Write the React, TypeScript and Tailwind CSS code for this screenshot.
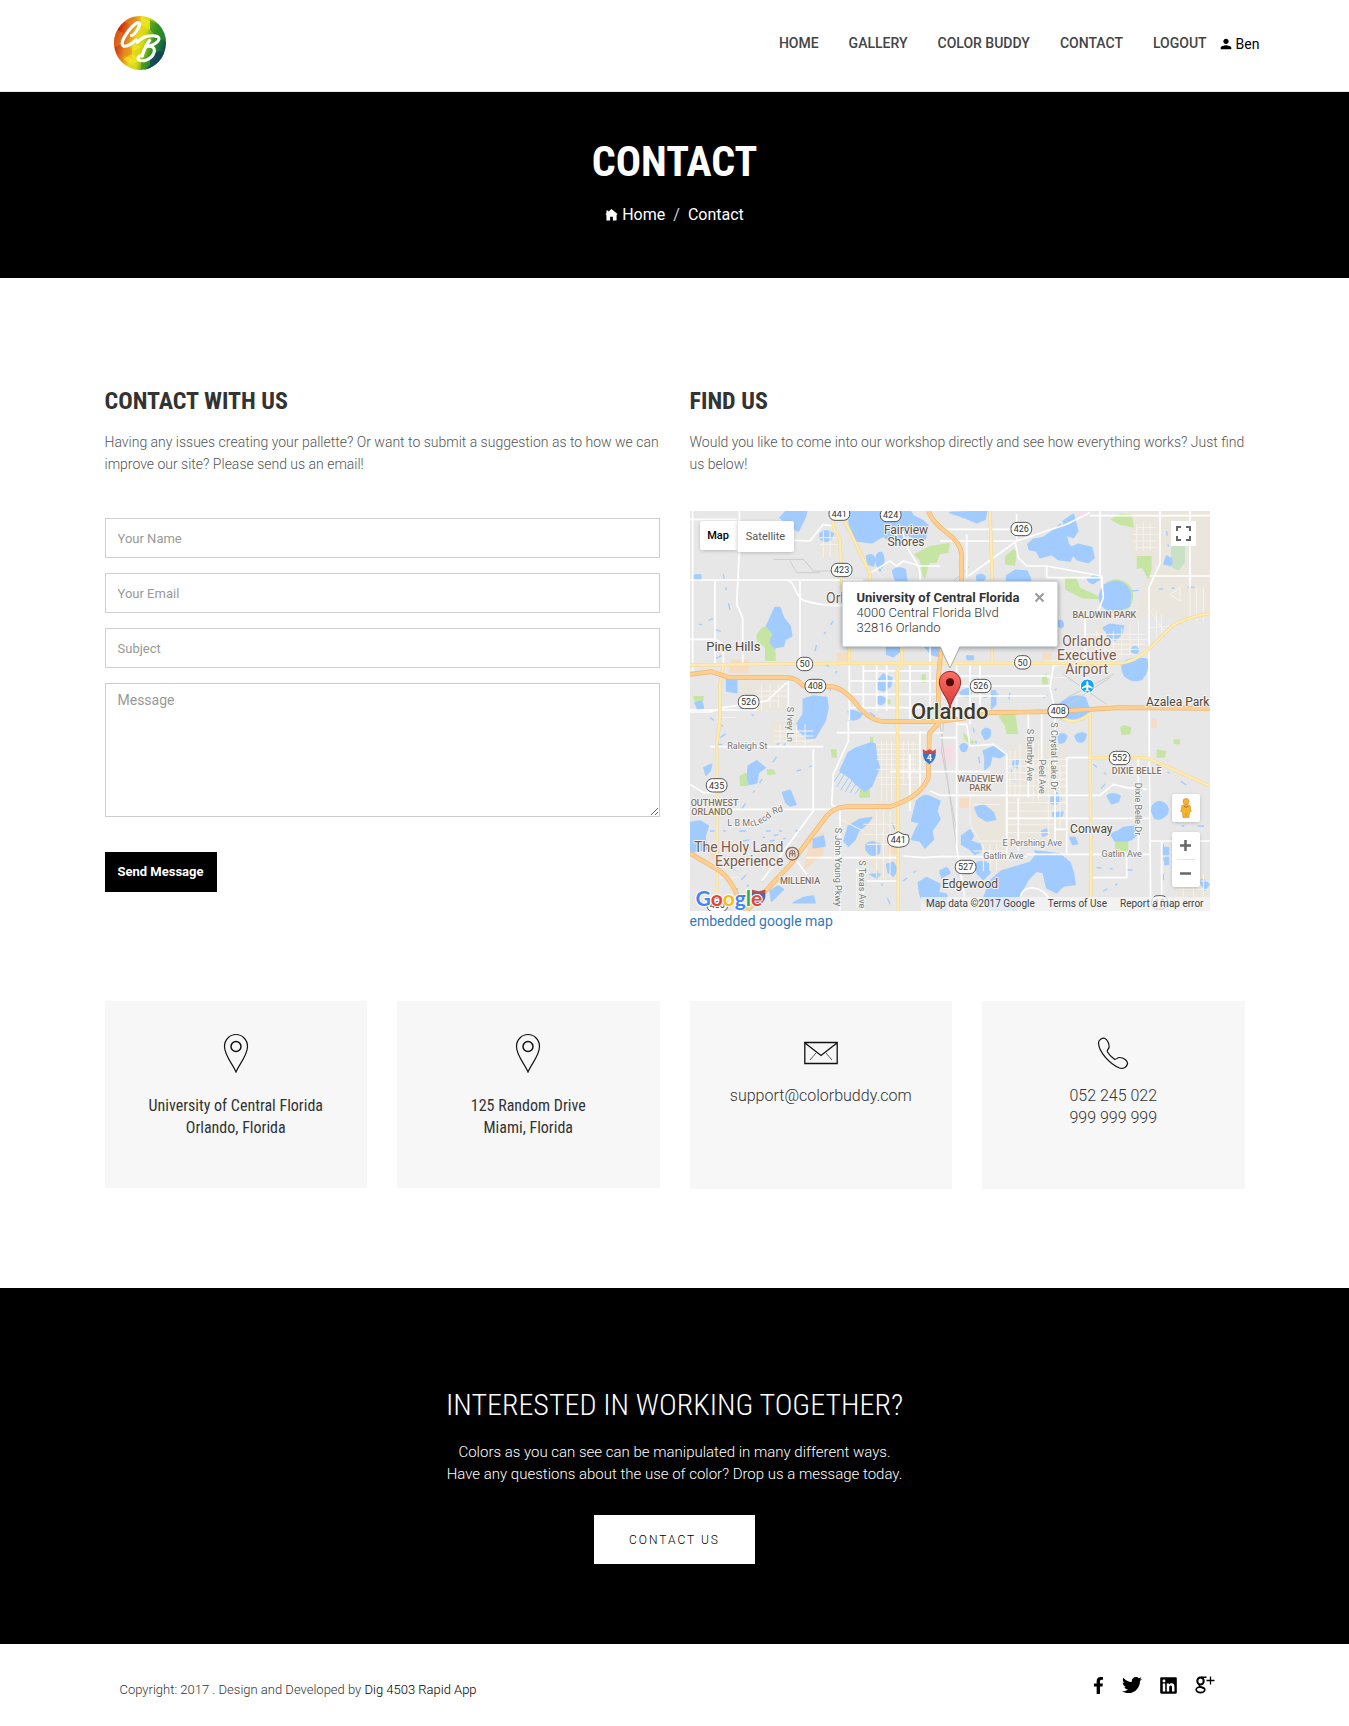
import React from "react";
import { MdPerson } from "react-icons/md";
import { FaFacebookF, FaTwitter, FaLinkedin } from "react-icons/fa";

const condensed = "font-['Roboto_Condensed','Roboto',sans-serif]";

const navItems = ["HOME", "GALLERY", "COLOR BUDDY", "CONTACT", "LOGOUT"];

function Logo() {
  return (
    <svg viewBox="0 0 52 54" className="h-[54px] w-[52px]" role="img" aria-label="Color Buddy">
      <defs>
        <linearGradient id="rainbow" x1="0" y1="0.35" x2="1" y2="0.65">
          <stop offset="0" stopColor="#b81208" />
          <stop offset="0.2" stopColor="#e0641a" />
          <stop offset="0.42" stopColor="#e8d818" />
          <stop offset="0.55" stopColor="#d3d916" />
          <stop offset="0.72" stopColor="#3f9a22" />
          <stop offset="0.88" stopColor="#17703a" />
          <stop offset="1" stopColor="#123c55" />
        </linearGradient>
        <clipPath id="disc">
          <ellipse cx="26" cy="27" rx="26" ry="27" />
        </clipPath>
      </defs>
      <g clipPath="url(#disc)">
        <rect width="52" height="54" fill="url(#rainbow)" />
        <path d="M0 12l9 5v10l-9 5zM18 0l9 5-9 5-9-5zM9 28l9 5v10l-9-5z" fill="#e8861d" opacity=".55" />
        <path d="M27 0l9 5v9l-9-5zM18 38l9 5-9 6-9-6zM18 26l9 5-9 5z" fill="#f3ea2c" opacity=".6" />
        <path d="M36 14l9-5 7 5v12l-7-4zM27 44l9-5v10l-9 5zM36 4l9 5-9 5z" fill="#2f8f25" opacity=".6" />
        <path d="M36 40l9-5 7 4v15H30l6-5z" fill="#123c60" opacity=".75" />
      </g>
      <g fill="none" stroke="#fff" strokeLinecap="round" strokeLinejoin="round">
        <path d="M17.500 19.500C21 19 26 10 25.500 7.500 24.500 4.500 18.500 9 14 15.500 9 22.500 6.500 28.500 9.500 30 12 31 17.500 28.500 22 24" strokeWidth="3.200" />
        <path d="M23.500 26.500C28 20 38 18.500 43.500 20.500 48 23 42 29 32.500 30.500 39 29.500 42 32.500 39.500 38 36.500 44 28.500 46 25 44 22.500 42 25 39 28.500 39.500" strokeWidth="3" />
        <path d="M35.500 24.500C32 29 30 34 28 40" strokeWidth="3.400" />
      </g>
    </svg>
  );
}

/* ---------- Map artwork, drawn at three units per pixel ---------- */

const whiteRoads = [
  "M0 207H520", "M290 207C320 215 310 250 340 268C380 280 420 285 460 284", "M148 0V120L140 280 158 320V460",
  "M75 210V460", "M8 0V480", "M330 210V457", "M0 385H75L100 400V462", "M478 457V627",
  "M0 25H140M240 85L360 90 400 40 430 45", "M295 510V597", "M200 597H0L0 603 60 603 100 590 230 570 290 515",
  "M60 707H400", "M110 895H420", "M370 715V900L215 1110", "M475 630V690L430 790 425 880 450 900V1197",
  "M440 665H760", "M350 1040H625M320 1050L350 1090", "M530 1110H625M520 1197V1110L500 1075", "M0 820L40 845H80M600 782H900",
  "M540 187L600 150 620 165 640 150 690 165 750 165", "M640 60C640 120 690 150 690 187V207", "M750 55H980M750 90H980V10",
  "M830 70V200M835 195L980 90 1130 40 1200 5", "M975 90L985 140 1010 165 1070 165 1235 195V230", "M1070 165V200H1235L1240 260 1225 300 1185 310",
  "M1410 0V157L1377 230V600L1382 1200", "M1200 14H1560M1500 0V230", "M1380 195H1560", "M1230 0V195",
  "M1185 310V450L1090 465 1080 530 1095 597", "M720 407V600M520 457V600M560 457V600M590 457V600M660 457V630",
  "M480 510H750M480 550H750M480 590H750M520 480H720", "M800 457V1010L830 1197", "M840 457V640M870 457V600M750 525H1080M760 495H1080M760 555H1070",
  "M800 640H830L840 705 910 700 950 730V1030", "M750 680H800M750 853H1230L1270 820 1310 830 1370 835", "M750 1037H1010",
  "M950 922H1377", "M1130 740V1030M1130 740H1200M1095 597V1000", "M1015 600V860M1055 610V850", "M1010 1030H1380M1310 1030V1100H1205",
  "M950 840V1000M985 860V1020M1095 955H1130", "M1382 990H1560M1415 990V1180M1345 740V1030", "M990 1160C1000 1120 1050 1120 1080 1165",
  "M750 1037L700 1040 640 1035", "M660 730V900M690 660V830M720 840L750 853",
];

const localStreets = [
  "M560 700H690M560 715H690M560 730H690M560 745H680M570 760H680M560 775H690M560 800H690M570 820H680",
  "M575 690V870M590 690V870M605 690V870M640 690V820M655 690V800M670 690V780",
  "M960 720V860M975 720V860M990 700V860M1030 690V870M1045 690V870M1075 750V1000M1110 760V960",
  "M950 745H1130M950 765H1130M950 785H1130M950 805H1130M950 825H1130M950 875H1130M950 900H1130M950 940H1100M950 965H1080",
  "M1330 70H1410M1330 90H1400M1335 110H1400M1340 50H1400M1340 40V120M1360 35V120M1380 35V120",
  "M1180 370H1370M1200 385H1370M1220 400H1365M1220 415H1350M1200 430H1340M1220 360V450M1245 360V450M1270 360V445M1295 350V440M1320 340V430M1345 330V410",
  "M1380 300L1430 370M1380 350L1440 345M1400 300V380M1415 310V390M1440 250L1470 230V270Z",
  "M200 540H290M200 555H290M190 570H270M215 520V600M240 520V590M265 520V590M180 500H290",
  "M250 660H370M250 675H370M250 690H370M270 640V705M295 640V705M320 640V705M345 640V705",
  "M390 80H450M390 100H450M400 60V140M420 60V140M560 180L580 200M570 170L590 190",
  "M440 920L520 960M520 940H620M520 970H620M560 900V1100M580 900V1100M600 900V1100M530 1000H620",
  "M840 850V940L870 990H940M850 880H930M880 1000V1080M900 1000V1080M920 1000V1080M850 1020H950",
  "M1460 1110H1560M1460 1135H1560M1480 1090V1160M1510 1090V1160M1540 1090V1160M1500 230V330M1520 230V330M1540 230V330",
  "M500 1070V1190M80 620H140M85 1100H150M1060 450H1150M1070 500H1130",
];

const lakes = [
  "M475 0L480 60 500 90 545 95 580 75 600 90 640 80 650 70 690 90 705 85 715 45 700 30 670 15 660 0Z",
  "M270 20L300 45 325 60 345 20 350 0H290Z", "M390 70Q405 50 430 68Q425 92 405 90Q388 88 390 70Z",
  "M530 135Q550 125 555 145L550 165Q530 165 530 135ZM560 160Q555 120 575 125Q590 145 570 180Z",
  "M608 180Q620 165 645 175L655 235 635 225 615 205Z", "M255 290L270 290 280 320 300 345 305 375 285 385 280 405 255 410 240 395 250 370 230 345Z",
  "M590 400L625 405 630 420 610 437 590 430ZM705 408L755 407 750 437 725 430Z",
  "M562 510L580 490 605 500 602 525 580 540 565 535Z", "M560 560Q570 552 585 562Q587 578 570 580Q556 575 560 560Z",
  "M340 565L370 555 410 560 414 590 405 630 375 680 350 682 325 655 320 640 340 610Z",
  "M110 500H140V545L110 540ZM12 205H32V192H14ZM15 575L35 570 40 590 25 598Z",
  "M450 780L475 725 500 710 545 695 555 700 560 740 568 770 545 825 525 840 500 820 480 800Z",
  "M475 600Q490 595 515 610 505 630 480 625ZM175 765L200 750 225 770 205 785 200 815 178 820 172 800Z",
  "M278 845L300 838 318 880 300 885 288 875ZM42 770L65 760 60 780 48 792Z",
  "M0 935L30 930 55 945 45 975 50 1015 20 1020 0 1025Z", "M475 945L510 925 545 920 530 940 505 960 495 985 475 1005 462 990Z",
  "M528 1000Q545 985 570 1000L568 1025Q545 1045 528 1015ZM370 985L400 975 405 1005 370 1010Z",
  "M680 870Q700 850 715 855L750 870 740 900 750 925 725 960 730 985 705 1010 690 990 665 985 680 950 690 935 665 930Z",
  "M310 1175L340 1160 370 1155 375 1175ZM240 1140L265 1125 280 1135 245 1170ZM590 1060L610 1055 622 1075 610 1095 595 1085Z",
  "M685 1115L710 1100 750 1120 745 1145 770 1150 770 1197H740L700 1175 690 1150Z",
  "M1014 100L1030 85 1060 80 1095 55 1110 40 1125 60 1135 100 1155 120 1140 150 1105 145 1085 130 1050 140 1040 120 1018 115Z",
  "M780 5L890 0 885 25 860 35 825 20ZM1120 30L1150 10 1163 60 1150 80 1125 70Z", "M1147 108L1165 100 1205 110 1212 140 1195 155 1160 145 1150 130Z",
  "M950 195L975 178 1010 180 1020 200 1022 212H950ZM860 195Q875 185 885 197 885 212 862 212Z",
  "M1192 203L1220 192 1228 205 1210 217Q1195 215 1192 203Z", "M1228 260Q1235 215 1275 212Q1310 212 1322 250L1318 285Q1290 300 1255 297Q1230 285 1228 260Z",
  "M1240 350L1260 340 1300 345 1295 370 1275 388 1255 380ZM1323 418Q1330 400 1345 412L1343 425Q1330 430 1323 418Z",
  "M1298 455Q1330 435 1370 445Q1378 480 1355 505Q1330 515 1305 495Q1292 475 1298 455Z",
  "M1110 578Q1150 545 1185 560L1200 600 1180 625H1115ZM810 545Q825 530 845 535L840 555Q820 562 810 545Z",
  "M905 540H917V580L905 592ZM1106 330Q1120 325 1120 345 1115 355 1106 345ZM830 435H850V445H832Z",
  "M875 665Q885 645 900 657 905 680 885 685ZM810 705Q822 690 832 705 830 725 815 720ZM1103 675Q1118 662 1130 675 1125 700 1108 695Z",
  "M1155 675Q1170 660 1188 670 1185 700 1162 690ZM880 720L910 707 930 715 945 730 930 740 905 735 900 760 885 775 885 740Z",
  "M1085 855L1100 845 1113 865 1095 882 1082 875ZM1252 855Q1265 842 1290 855L1285 872 1265 878ZM855 890L880 880 910 905 917 925 890 930 865 915Z",
  "M1385 900Q1385 875 1410 872Q1438 880 1433 905Q1415 930 1395 922Z", "M1262 970L1285 960 1300 950 1340 945 1342 970 1325 985 1310 990 1275 990Z",
  "M815 975L840 957 850 975 840 990 870 1000 875 1020 855 1030 840 1015 815 1000ZM1140 980H1155L1162 998 1148 1000Z",
  "M855 1060Q870 1045 895 1058L900 1085 880 1105 860 1085Z", "M880 1165L900 1110 935 1080 985 1065 1020 1055 1040 1030 1035 1020 1075 1025 1110 1030 1140 1055 1150 1085 1155 1120 1120 1125 1100 1145 1070 1130 1060 1085 1040 1080 1015 1105 990 1150 980 1200H900Z",
  "M750 1080L770 1070 780 1085 755 1100ZM1530 1110Q1545 1100 1556 1120L1545 1138ZM1420 1010H1435V1030H1420ZM1425 1040H1435V1060H1425Z",
  "M1088 905L1120 900 1115 915 1090 918ZM1055 960L1070 955 1072 970 1058 975ZM970 750L985 748 980 770 968 765Z",
  "M540 1090H570L560 1100ZM1430 135L1445 145V160H1422Z",
];

const parks = [
  "M200 370L215 350 230 345 245 345 262 350 255 400 258 450H225V410L200 390Z", "M672 130L720 105 780 95 775 125 750 130 740 155 720 155 715 165 705 205 698 195 690 150Z",
  "M945 135L970 115 980 120 975 165 945 160Z", "M1260 25L1290 8 1325 10 1332 50 1290 42Z", "M1340 135H1385V175L1375 205 1355 170 1340 175Z",
  "M1125 200L1160 203 1170 230 1225 255 1225 265 1175 262 1125 235Z", "M148 795L165 785 180 800 175 825H150Z",
  "M510 820L540 818V860H508ZM540 677H550V702H540ZM422 715H440V740H425Z", "M925 615L975 600 985 670H950L945 645Z",
  "M1275 990H1315V1020H1275ZM1290 650Q1300 635 1325 650L1320 670 1295 672ZM1405 560H1445V575H1405Z",
  "M1400 715L1430 720 1425 740H1400ZM10 555H42L40 570H12ZM1450 685H1470V700H1452ZM588 565H602V580H588Z",
  "M1055 500L1070 485 1075 520 1058 520ZM230 775H250L258 790 232 792ZM820 665L855 695 840 700 822 685ZM695 490H707V515H695Z",
];

const sandyAreas = [
  "M560 660H700V880H560Z", "M950 700H1130V1010H950Z", "M1200 320H1560V150H1600V0H1320V120L1370 180 1340 300 1240 320 1180 400 1240 450 1370 410Z",
  "M130 460H290V600H170Z", "M240 630H370V700H240Z", "M390 60H450V140H390Z", "M440 900H620V1110H560L500 1000Z", "M840 860H950V1080H900L850 960Z",
  "M1460 1090H1560V1170H1460Z",
];

const orangeAreas = ["M125 445H175V485H115Z", "M440 425H475V450H440Z", "M360 990L400 960V1030L340 1080Z", "M590 980H620V1030H595Z", "M1060 425H1085V460H1055Z", "M810 860H840V890H808Z", "M1385 625H1400V650H1385Z", "M60 1010H90V1045H58Z"];

const yellowRoads = [
  "M0 462L470 457H1290Q1330 454 1370 420L1450 342Q1490 320 1560 307",
  "M430 0V47L450 87 455 217 478 417V457", "M455 10L540 187V212", "M635 407V460L622 480V600L625 1200",
  "M100 462L90 520V627L80 700V1200", "M900 0L907 212V457", "M1200 607L1203 1157V1200", "M1200 740H1370L1560 825", "M1110 615Q1150 650 1200 607",
];

const orangeRoads = [
  "M0 490L65 482 120 500H290Q320 500 340 525L425 527Q460 530 500 580 540 632 590 632H720Q800 630 900 605L1080 602 1290 590 1560 592",
  "M170 1200L300 1062 410 915Q430 890 470 887H600Q690 860 715 800L718 667 745 637V500L755 400V212",
  "M715 0Q725 30 770 65 812 95 815 130V215", "M0 1027L90 1080Q130 1110 150 1177L170 1200",
];

const shields: [string, number, number][] = [
  ["441", 448, 8], ["424", 602, 12], ["423", 455, 177], ["426", 994, 54], ["50", 344, 459], ["50", 998, 454], ["408", 376, 525],
  ["408", 1105, 600], ["526", 176, 573], ["526", 872, 525], ["435", 80, 823], ["552", 1289, 741], ["527", 827, 1068], ["435", 82, 1182], ["15", 1409, 1174],
];

type Label = { t: string; x: number; y: number; s: number; c?: string; w?: number; r?: number; a?: "start" | "middle" | "end" };

const labels: Label[] = [
  { t: "Fairview", x: 648, y: 69, s: 36, c: "#5d4c43" },
  { t: "Shores", x: 648, y: 105, s: 36, c: "#5d4c43" },
  { t: "Orl", x: 408, y: 277, s: 42, c: "#7a5a48", a: "start" },
  { t: "Pine Hills", x: 130, y: 421, s: 39 },
  { t: "BALDWIN PARK", x: 1243, y: 321, s: 27, c: "#85705f", w: 500 },
  { t: "Orlando", x: 1190, y: 405, s: 42, c: "#7a5a48" },
  { t: "Executive", x: 1190, y: 447, s: 42, c: "#7a5a48" },
  { t: "Airport", x: 1190, y: 489, s: 42, c: "#7a5a48" },
  { t: "Azalea Park", x: 1558, y: 584, s: 36, a: "end" },
  { t: "Orlando", x: 779, y: 623, s: 66, c: "#3f3b2c", w: 500 },
  { t: "Raleigh St", x: 172, y: 714, s: 27, c: "#777" },
  { t: "S Ivey Ln", x: 290, y: 640, s: 27, c: "#777", r: 90 },
  { t: "OUTHWEST", x: 2, y: 886, s: 27, c: "#85705f", w: 500, a: "start" },
  { t: "ORLANDO", x: 4, y: 912, s: 27, c: "#85705f", w: 500, a: "start" },
  { t: "The Holy Land", x: 280, y: 1023, s: 42, c: "#7a5a48", a: "end" },
  { t: "Experience", x: 280, y: 1065, s: 42, c: "#7a5a48", a: "end" },
  { t: "MILLENIA", x: 330, y: 1118, s: 27, c: "#85705f", w: 500 },
  { t: "S John Young Pkwy", x: 434, y: 1068, s: 27, c: "#777", r: 90 },
  { t: "S Texas Ave", x: 508, y: 1120, s: 27, c: "#777", r: 90 },
  { t: "WADEVIEW", x: 871, y: 812, s: 27, c: "#85705f", w: 500 },
  { t: "PARK", x: 871, y: 839, s: 27, c: "#85705f", w: 500 },
  { t: "S Bumby Ave", x: 1010, y: 732, s: 27, c: "#777", r: 90 },
  { t: "Peel Ave", x: 1048, y: 797, s: 27, c: "#777", r: 90 },
  { t: "S Crystal Lake Dr", x: 1082, y: 736, s: 27, c: "#777", r: 90 },
  { t: "DIXIE BELLE", x: 1340, y: 788, s: 27, c: "#85705f", w: 500 },
  { t: "Dixie Belle Dr", x: 1336, y: 894, s: 27, c: "#777", r: 90 },
  { t: "Conway", x: 1204, y: 967, s: 36 },
  { t: "E Pershing Ave", x: 1027, y: 1005, s: 27, c: "#777" },
  { t: "Gatlin Ave", x: 940, y: 1043, s: 27, c: "#777" },
  { t: "Gatlin Ave", x: 1295, y: 1039, s: 27, c: "#777" },
  { t: "Edgewood", x: 840, y: 1131, s: 36 },
];

function MapArtwork() {
  return (
    <svg viewBox="0 0 1560 1200" className="block h-full w-full font-['Roboto',sans-serif]" role="img" aria-label="Map of Orlando, Florida">
      <rect width="1560" height="1200" fill="#e7e7e7" />
      <g fill="#ebe6dc" opacity=".8">{sandyAreas.map((d) => <path key={d} d={d} />)}</g>
      <g fill="#f5dcc3">{orangeAreas.map((d) => <path key={d} d={d} />)}</g>
      <path d="M750 705H800V755H750ZM1160 0H1185V20H1160Z" fill="#f3dfe5" />
      <path d="M1445 90H1485V155L1465 180 1440 165Z" fill="#c8e2c6" />
      <g fill="#c6e5a2">{parks.map((d) => <path key={d} d={d} />)}</g>
      <circle cx="1279" cy="256" r="51" fill="#c6e5a2" />
      <g fill="#a2ccff" stroke="#a2ccff" strokeWidth="5" strokeLinejoin="round">{lakes.map((d) => <path key={d} d={d} />)}</g>
      <g fill="none" stroke="#a2ccff" strokeWidth="4" strokeDasharray="14 26 8 40 20 60">
        <path d="M100 190L120 300 30 340 120 370 60 450 170 400" />
        <path d="M430 330L380 400 370 440 440 480 420 540M470 550L560 620M150 590L220 630" />
        <path d="M60 620L120 660 60 700 160 700M260 700L290 690 180 860 120 940M60 960H330L100 1000 140 1080" />
        <path d="M90 1060L170 1090 120 1140 220 1110M240 990L300 980 290 1040M320 780L380 760" />
        <path d="M1240 220L1320 240 1500 228 1560 232M1430 60L1440 160 1420 200M880 560L960 540 950 620M1060 560L1120 520" />
        <path d="M1210 760L1260 800 1220 850M1400 760L1500 830 1440 860M1460 920V945H1540V900M1220 1070L1360 1080M1420 1000V1180" />
        <path d="M560 1010L620 970 600 920M560 1080L600 1180M640 1110L700 1060M1240 1140L1300 1110M850 650L870 760M960 770L980 830" />
      </g>
      <path d="M454 780L430 815M466 785L440 828M478 795L452 838M488 805L466 842M500 815L480 846M512 825L496 848" stroke="#a2ccff" strokeWidth="3" />
      <g fill="none" stroke="#ccc" strokeWidth="3">
        <path d="M250 145H340L370 180H430M300 150L320 185H390" />
        <path d="M750 640L800 1010M760 637L755 720 800 960M840 165L770 230M1120 490L1250 580M1130 560L1270 490M1120 590L1260 500" />
      </g>
      <g fill="none" stroke="#f6f3ed" strokeWidth="3">{localStreets.map((d) => <path key={d} d={d} />)}</g>
      <g fill="none" stroke="#fff" strokeWidth="5" strokeLinejoin="round">{whiteRoads.map((d) => <path key={d} d={d} />)}</g>
      <g fill="none" stroke="#f0d896" strokeWidth="10" strokeLinejoin="round">{yellowRoads.map((d) => <path key={d} d={d} />)}</g>
      <g fill="none" stroke="#ffebb0" strokeWidth="7" strokeLinejoin="round">{yellowRoads.map((d) => <path key={d} d={d} />)}</g>
      <g fill="none" stroke="#edb673" strokeWidth="14" strokeLinejoin="round">{orangeRoads.map((d) => <path key={d} d={d} />)}</g>
      <g fill="none" stroke="#ffcf8f" strokeWidth="10" strokeLinejoin="round">{orangeRoads.map((d) => <path key={d} d={d} />)}</g>

      {shields.map(([t, x, y]) => (
        <g key={`${t}-${x}`}>
          <rect x={x - (t.length > 2 ? 31 : 24)} y={y - 20} width={t.length > 2 ? 62 : 48} height="40" rx="18" fill="#fff" stroke="#555" strokeWidth="3" />
          <text x={x} y={y + 10} fontSize="27" textAnchor="middle" fill="#333">{t}</text>
        </g>
      ))}
      <path d="M596 972Q612 972 625 962 638 972 654 972 660 984 656 994 652 1008 625 1009 598 1008 594 994 590 984 596 972Z" fill="#fff" stroke="#555" strokeWidth="3" />
      <text x="625" y="997" fontSize="27" textAnchor="middle" fill="#333">441</text>

      <g transform="translate(718 735)">
        <path d="M-20 -14Q-8 -12 0 -20 8 -12 20 -14V0Q18 16 0 26-18 16-20 0Z" fill="#3a74c4" stroke="#fff" strokeWidth="2" />
        <path d="M-20 -20L-10 -15 0 -20 10 -15 20 -20 19 -9H-19Z" fill="#c84a4a" />
        <text y="15" fontSize="27" fontWeight="700" textAnchor="middle" fill="#fff">4</text>
      </g>
      <g transform="translate(206 1158)">
        <path d="M-20 -20L0 -14 20 -20V0Q18 16 0 26-18 16-20 0Z" fill="#3f6aae" />
        <path d="M-20 -22L0 -17 20 -22 19 -10H-19Z" fill="#b84d55" />
      </g>

      <g strokeLinejoin="round">
        {labels.map((l) => (
          <text
            key={`${l.t}-${l.x}`}
            x={l.x}
            y={l.y}
            fontSize={l.s}
            fontWeight={l.w ?? 400}
            fill={l.c ?? "#50483a"}
            stroke="#f4f4f4"
            strokeWidth="6"
            paintOrder="stroke"
            textAnchor={l.a ?? "middle"}
            transform={l.r ? `rotate(${l.r} ${l.x} ${l.y})` : undefined}
          >
            {l.t}
          </text>
        ))}
        <path id="mcleod" d="M112 946H190Q230 935 250 910L310 892" fill="none" />
        <text fontSize="27" fill="#777" stroke="#f4f4f4" strokeWidth="6" paintOrder="stroke">
          <textPath href="#mcleod">L B McLeod Rd</textPath>
        </text>
      </g>

      <circle cx="1192" cy="525" r="21" fill="#12a5f4" stroke="#fff" strokeWidth="3" />
      <path d="M1192 510q3 0 3 5v6l13 8v4l-13-4v7l5 3v3l-8-2-8 2v-3l5-3v-7l-13 4v-4l13-8v-6q0-5 3-5z" fill="#fff" />
      <circle cx="307" cy="1028" r="19" fill="#e9dfd6" stroke="#8b6c5c" strokeWidth="4" />
      <path d="M299 1038v-12q0-8 8-8t8 8v12M307 1020v16M299 1028h16" fill="none" stroke="#8b6c5c" strokeWidth="3" />

      <defs>
        <linearGradient id="pin" x1="0" y1="0" x2="0" y2="1">
          <stop offset="0" stopColor="#fb6f68" />
          <stop offset="1" stopColor="#d93a32" />
        </linearGradient>
      </defs>
      <path d="M780 592C775 560 748 540 748 513A32 32 0 0 1 812 513C812 540 785 560 780 592Z" fill="url(#pin)" stroke="#8f2b26" strokeWidth="3" />
      <circle cx="780" cy="514" r="12" fill="#4d0f0c" />
    </svg>
  );
}

function MapView() {
  const letters: [string, string][] = [["G", "#4285f4"], ["o", "#ea4335"], ["o", "#fbbc05"], ["g", "#4285f4"], ["l", "#34a853"], ["e", "#ea4335"]];
  return (
    <div className="relative h-[400px] w-[520px] max-w-full overflow-hidden">
      <MapArtwork />
      <div className="absolute left-[10px] top-[10px] flex items-start text-[11px]">
        <button className="h-[29px] w-[37px] rounded-l-xs bg-white font-medium text-black shadow-[0_1px_4px_-1px_rgba(0,0,0,0.3)]">Map</button>
        <button className="h-[31px] w-[57px] rounded-r-xs border-l border-gray-200 bg-white text-[#565656] shadow-[0_1px_4px_-1px_rgba(0,0,0,0.3)]">Satellite</button>
      </div>
      <button aria-label="Toggle fullscreen" className="absolute right-[14px] top-[10px] flex size-[25px] items-center justify-center bg-white">
        <svg viewBox="0 0 15 15" className="size-[15px]" fill="none" stroke="#666" strokeWidth="2">
          <path d="M1 5V1h4M10 1h4v4M14 10v4h-4M5 14H1v-4" />
        </svg>
      </button>

      <div className="absolute left-[152px] top-[70px] h-[66px] w-[216px] rounded-xs border border-gray-300 bg-white pl-[14px] pt-2 text-[13px] leading-[15px] text-[#333] shadow-[0_1px_5px_rgba(0,0,0,0.4)]">
        <strong className="block font-bold text-[#333]">University of Central Florida</strong>
        <p className="font-light">4000 Central Florida Blvd</p>
        <p className="font-light">32816 Orlando</p>
        <button aria-label="Close" className="absolute right-[12px] top-[10px] size-[11px]">
          <svg viewBox="0 0 11 11" className="size-[11px]" stroke="#999" strokeWidth="2">
            <path d="M1.500 1.500l8 8M9.500 1.500l-8 8" />
          </svg>
        </button>
        <svg viewBox="0 0 24 24" className="absolute left-[96px] top-[63px] size-6">
          <path d="M1 0L11 23 21 0Z" fill="#fff" />
          <path d="M1 2L11 23 21 2" fill="none" stroke="#aaa" />
        </svg>
      </div>

      <button aria-label="Street View" className="absolute right-[10px] top-[283px] flex size-7 items-center justify-center rounded-xs bg-white shadow-[0_1px_4px_-1px_rgba(0,0,0,0.3)]">
        <svg viewBox="0 0 12 20" className="h-5 w-3" fill="#f6b52c" stroke="#c98a17" strokeWidth=".6">
          <path d="M2 7.500Q6 5.500 10 7.500L11.200 13.500 9.500 14 9 19.500H6.500L6 15 5.500 19.500H3L2.500 14 .8 13.500Z" />
          <circle cx="6" cy="3.500" r="3" />
          <path d="M4 8l2 1.500L8 8" fill="none" stroke="#e4572e" strokeWidth="1" />
        </svg>
      </button>
      <div className="absolute right-[10px] top-[321px] flex w-7 flex-col items-center rounded-xs bg-white shadow-[0_1px_4px_-1px_rgba(0,0,0,0.3)]">
        <button aria-label="Zoom in" className="flex h-[27px] w-full items-center justify-center">
          <svg viewBox="0 0 11 11" className="size-[11px]" stroke="#666" strokeWidth="2.500"><path d="M5.500 0v11M0 5.500h11" /></svg>
        </button>
        <div className="h-px w-[18px] bg-[#e6e6e6]" />
        <button aria-label="Zoom out" className="flex h-[27px] w-full items-center justify-center">
          <svg viewBox="0 0 11 11" className="size-[11px]" stroke="#666" strokeWidth="2.500"><path d="M0 5.500h11" /></svg>
        </button>
      </div>

      <div className="absolute bottom-[1px] left-[6px] font-['Lato',sans-serif] text-[21px] leading-6 font-bold">
        {letters.map(([ch, color], i) => (
          <span key={i} style={{ color }} className="[-webkit-text-stroke:2px_white] [paint-order:stroke]">{ch}</span>
        ))}
      </div>
      <div className="absolute bottom-0 right-0 flex h-[14px] items-center gap-[13px] bg-[#f5f5f5]/75 pl-[5px] pr-[6px] text-[10px] leading-[14px] text-[#444]">
        <span>Map data ©2017 Google</span>
        <a href="#terms">Terms of Use</a>
        <a href="#report">Report a map error</a>
      </div>
    </div>
  );
}

const PinIcon = () => (
  <svg viewBox="0 0 26 40" className="h-10 w-[26px]" fill="none" stroke="#111">
    <path d="M13 39C10 31.500 1.500 22.500 1.500 13.500A11.500 12 0 0 1 24.500 13.500C24.500 22.500 16 31.500 13 39Z" strokeWidth="1.200" />
    <circle cx="13" cy="13.500" r="5" strokeWidth="1.500" />
  </svg>
);

const EnvelopeIcon = () => (
  <svg viewBox="0 0 34 24" className="h-6 w-[34px]" fill="none" stroke="#111">
    <path d="M.8 1.500h32.400v21H.8z M1 2l16 12.500L33 2" strokeWidth="1.300" />
    <path d="M12 12l-6 7M22 12l6 7" strokeWidth=".7" />
  </svg>
);

const PhoneIcon = () => (
  <svg viewBox="0 0 32 32" className="size-8" fill="none" stroke="#111" strokeWidth="1.200">
    <path d="M1.500 5.500C2 2.500 5.500 .5 8 1.500 10.500 2.500 12.500 7.500 12 10.500 11.500 12.500 9.500 13 10.500 15 12.500 18.500 15 20.500 17.500 22.200 19 23 20 20.500 22.500 20.500 26.500 20.500 31 23.500 30.500 27 29.500 30.500 26 32 22.500 31 12.500 27 1.500 14.500 1.500 5.500Z" />
  </svg>
);

const inputClass = "block h-10 w-full border border-[#ccd0d2] bg-white px-3 text-[13px] text-[#555] placeholder:text-[#999]";

export default function App() {
  return (
    <div className="bg-white font-['Roboto',sans-serif] text-sm text-[#333]">
      <header className="border-b border-[#e7e7e7]">
        <div className="mx-auto flex h-[91px] max-w-[1170px] items-start justify-between">
          <a href="#home" className="ml-6 mt-4 block"><Logo /></a>
          <nav className="mt-[31px] flex items-center">
            <ul className="flex gap-[30px]">
              {navItems.map((n) => (
                <li key={n}><a href="#nav" className="block text-sm leading-[22px] font-medium text-[#444]">{n}</a></li>
              ))}
            </ul>
            <a href="#account" className="ml-[11px] mt-[2px] flex items-center gap-[2px] text-sm leading-[22px] text-black">
              <MdPerson className="size-4" />
              <span>Ben</span>
            </a>
          </nav>
        </div>
      </header>

      <section className="flex flex-col items-center bg-black pb-[51px] pt-[47px] text-white">
        <h1 className={`text-[42px] leading-[46px] font-bold ${condensed}`}>CONTACT</h1>
        <div className="mt-[18px] flex items-center text-base leading-6">
          <svg viewBox="0 0 13 13" className="mr-1 h-3 w-[13px]" fill="#fff">
            <path d="M6.500 0L13 5.500 12 6.500V12.500H8V8.500H5V12.500H1V6.500L0 5.500 1 4.700V1.500H3V3Z" />
          </svg>
          <a href="#home">Home</a>
          <span className="mx-2 text-gray-300">/</span>
          <span>Contact</span>
        </div>
      </section>

      <main className="mx-auto max-w-[1170px] px-[15px] pb-[99px] pt-[110px]">
        <div className="grid grid-cols-1 gap-[30px] md:grid-cols-2">
          <section>
            <h2 className={`text-2xl leading-[26px] font-bold ${condensed}`}>CONTACT WITH US</h2>
            <p className="mt-[17px] font-light leading-[22px] text-[#555]">
              Having any issues creating your pallette? Or want to submit a suggestion as to how we can improve our site? Please send us an email!
            </p>
            <form className="mt-[43px] flex flex-col gap-[15px]" onSubmit={(e) => e.preventDefault()}>
              <input aria-label="Your Name" placeholder="Your Name" className={inputClass} />
              <input aria-label="Your Email" type="email" placeholder="Your Email" className={inputClass} />
              <input aria-label="Subject" placeholder="Subject" className={inputClass} />
              <textarea aria-label="Message" placeholder="Message" className="block h-[134px] w-full resize border border-[#ccc] px-3 py-[6px] text-sm text-[#555] placeholder:text-[#999]" />
              <button type="submit" className="mt-5 h-10 self-start bg-black px-[13px] text-[13px] font-bold text-white">Send Message</button>
            </form>
          </section>
          <section>
            <h2 className={`text-2xl leading-[26px] font-bold ${condensed}`}>FIND US</h2>
            <p className="mb-9 mt-[17px] font-light leading-[22px] text-[#555]">
              Would you like to come into our workshop directly and see how everything works? Just find us below!
            </p>
            <MapView />
            <a href="#map" className="block leading-5 text-[#337ab7]">embedded google map</a>
          </section>
        </div>

        <div className="mt-[70px] grid grid-cols-2 items-start gap-[30px] text-center text-base leading-[22px] md:grid-cols-4">
          <div className={`h-[187px] bg-[#f7f7f7] pt-8 ${condensed}`}>
            <div className="flex h-10 justify-center"><PinIcon /></div>
            <p className="mt-[22px]">University of Central Florida<br />Orlando, Florida</p>
          </div>
          <div className={`h-[187px] bg-[#f7f7f7] pt-8 ${condensed}`}>
            <div className="flex h-10 justify-center"><PinIcon /></div>
            <p className="mt-[22px]">125 Random Drive<br />Miami, Florida</p>
          </div>
          <div className="h-[188px] bg-[#f7f7f7] pt-8 font-light">
            <div className="flex h-10 items-center justify-center"><EnvelopeIcon /></div>
            <p className="mt-3">support@colorbuddy.com</p>
          </div>
          <div className="h-[188px] bg-[#f7f7f7] pt-8 font-light">
            <div className="flex h-10 items-center justify-center"><PhoneIcon /></div>
            <p className="mt-3">052 245 022<br />999 999 999</p>
          </div>
        </div>
      </main>

      <section className="flex flex-col items-center bg-black pb-20 pt-[100px] text-center text-white">
        <h2 className={`text-[30px] leading-[33px] font-light ${condensed}`}>INTERESTED IN WORKING TOGETHER?</h2>
        <p className="mt-5 text-[15px] leading-[22px] font-light">
          Colors as you can see can be manipulated in many different ways.<br />Have any questions about the use of color? Drop us a message today.
        </p>
        <button className="mt-[30px] h-[49px] bg-white px-[35px] text-xs font-light tracking-[2px] text-black">CONTACT US</button>
      </section>

      <footer className="mx-auto flex h-[82px] max-w-[1170px] items-center justify-between px-[30px] text-[13px]">
        <p className="mt-[10px] font-light">Copyright: 2017 . Design and Developed by <a href="#rapid" className="text-black">Dig 4503 Rapid App</a></p>
        <div className="flex items-center gap-[18px] pr-[15px] text-black">
          <a href="#facebook" aria-label="Facebook"><FaFacebookF className="h-[17px] w-[11px]" /></a>
          <a href="#twitter" aria-label="Twitter"><FaTwitter className="size-5" /></a>
          <a href="#linkedin" aria-label="LinkedIn"><FaLinkedin className="h-[19px] w-[17px]" /></a>
          <a href="#google-plus" aria-label="Google Plus">
            <svg viewBox="0 0 20 18" className="h-[18px] w-5" fill="none" stroke="#000">
              <ellipse cx="5.500" cy="5" rx="3.200" ry="3.600" strokeWidth="2" />
              <path d="M6 1.300h5.500M5 8.500Q3.500 10 5 10.800L9 12.500" strokeWidth="1.500" />
              <ellipse cx="5.500" cy="13.800" rx="4.300" ry="2.800" strokeWidth="1.700" />
              <path d="M15.500 .5v8M11.500 4.500h8" strokeWidth="1.300" />
            </svg>
          </a>
        </div>
      </footer>
    </div>
  );
}
